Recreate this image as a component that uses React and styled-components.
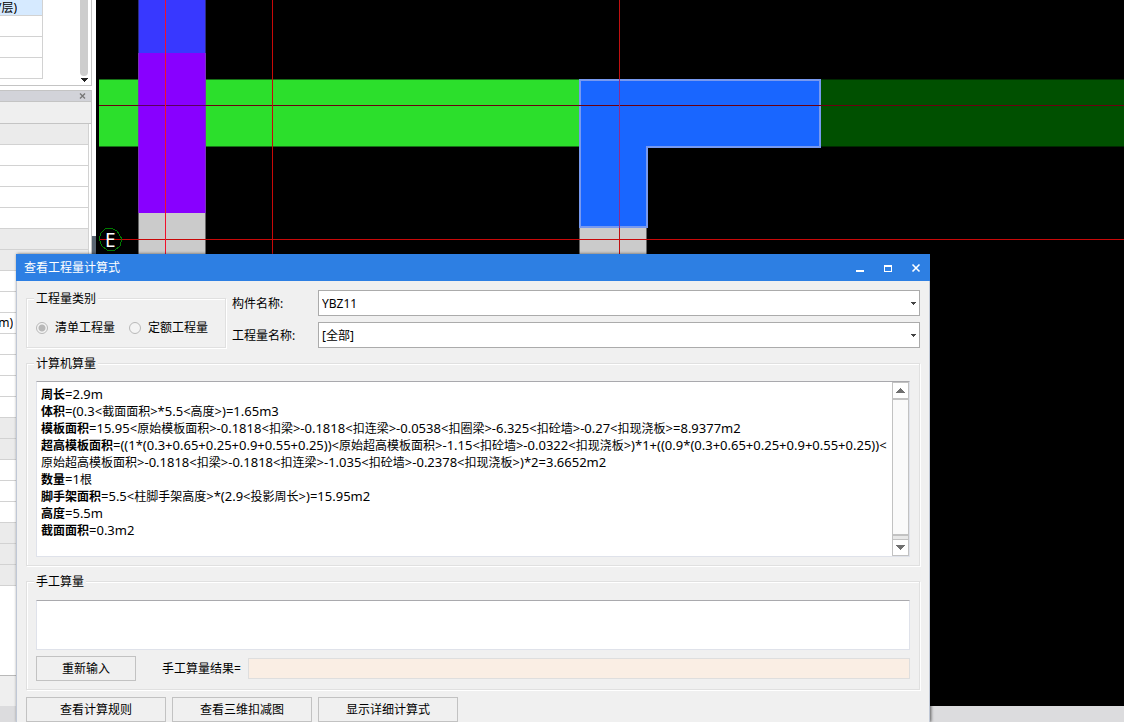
import { useState } from 'react';
import styled, { createGlobalStyle } from 'styled-components';

const GlobalStyle = createGlobalStyle`
* {
  box-sizing: border-box;
}
body {
  margin: 0;
  background: #000;
}
body, button, input, select, textarea {
  font-family: "Noto Sans", "Noto Sans CJK SC", sans-serif;
  font-size: 12px;
  line-height: 16px;
  color: #000;
}
`

const Page = styled.div`
position: relative;
display: grid;
grid-template-columns: 92px 4px 1fr;
grid-template-rows: 1fr 16px;
height: 100vh;
overflow: hidden;
`

const Dock = styled.aside`
display: flex;
flex-direction: column;
min-height: 0;
overflow: hidden;
background: #fff;
`
const TreePanel = styled.div`
display: flex;
justify-content: space-between;
height: 86px;
flex: none;
padding-right: 3px;
border-right: 1px solid #c4c4c4;
border-bottom: 1px solid #c4c4c4;
`
const Table = styled.table`
width: ${(p) => p.$width};
height: max-content;
border-spacing: 0;
border-right: 1px solid #d2d2d2;

td {
  height: 21px;
  padding: 0;
  line-height: 16px;
  white-space: nowrap;
  border-bottom: 1px solid #d2d2d2;
}
`
const Cell = styled.td`
background: ${(p) => p.$fill};
`
const TreeCell = styled(Cell)`
&& {
  height: 16px;
  line-height: 15px;
}
`
const Clipped = styled.div`
display: flex;
justify-content: flex-end;
width: ${(p) => p.$width};
overflow: hidden;
`
const TreeScroll = styled.div`
display: flex;
flex-direction: column;
align-items: center;
gap: 2px;
width: 8px;

span {
  width: 8px;
  height: 76px;
  border-radius: 0 0 4px 4px;
  background: #cdcdcd;
}
`
const PanelTitle = styled.div`
display: flex;
align-items: center;
justify-content: flex-end;
flex: none;
height: 12px;
margin-top: 4px;
padding-right: 5px;
background: #d2d3d9;
border: solid #c4c4c4;
border-width: 1px 1px 1px 0;

button {
  display: flex;
  padding: 0;
  border: 0;
  background: none;
}
`
const PanelBar = styled.div`
flex: none;
height: 22px;
background: #efefef;
border-right: 1px solid #c4c4c4;
border-bottom: 1px solid #c4c4c4;
`
const Properties = styled.div`
flex: none;
border-right: 1px solid #c4c4c4;
`
const EmptyArea = styled.div`
flex: none;
height: 90px;
border-bottom: 1px solid #b9b9b9;
`
const DockFoot = styled.div`
flex: 1;
background: #efefef;
`
const Splitter = styled.div`
padding-top: 236px;
background: #fff;

&::after {
  content: "";
  display: block;
  height: 100%;
  background: #5a6672;
}
`
const Canvas = styled.main`
min-width: 0;
overflow: hidden;
background: #000;

svg {
  display: block;
}
`
const StatusBar = styled.footer`
grid-column: 1 / -1;
background: #dcdcde;
`

const Dialog = styled.section`
position: absolute;
left: 16px;
right: 194px;
top: 254px;
bottom: 0;
display: flex;
flex-direction: column;
background: #f0f0f0;
box-shadow: 1px 0 3px rgba(0, 0, 0, 0.6);
`
const TitleBar = styled.header`
display: flex;
align-items: center;
justify-content: space-between;
flex: none;
height: 27px;
padding: 0 8px;
background: #2d7fe3;

h1 {
  margin: 0;
  font-size: 12px;
  font-weight: 400;
  color: #fff;
}
`
const WindowButtons = styled.div`
display: flex;
gap: 16px;

button {
  display: flex;
  padding: 0;
  border: 0;
  background: none;
}
`
const Body = styled.div`
flex: 1;
display: flex;
flex-direction: column;
gap: 7px;
padding: 9px 9px 0;
border: solid #c0c8d6;
border-width: 0 1px;
`
const TopRow = styled.div`
display: flex;
gap: 6px;
`
const Group = styled.fieldset`
flex: none;
min-width: 0;
margin: 0;
padding: ${(p) => p.$pad};
width: ${(p) => p.$width || 'auto'};
border: 1px solid #e0e0e0;
box-shadow: inset 1px 1px 0 #fff, 1px 1px 0 #fff;

legend {
  height: 16px;
  padding: 0 2px;
  margin-left: -2px;
  line-height: 18px;
  background: #f0f0f0;
}
`
const Radios = styled.div`
display: flex;
gap: 14px;
height: 17px;
`
const RadioLabel = styled.label`
display: flex;
align-items: center;
gap: 7px;
line-height: 18px;

input {
  appearance: none;
  width: 12px;
  height: 12px;
  margin: 0;
  border: 1px solid #b8b8b8;
  border-radius: 50%;
  background: #f4f4f4;
}
input:checked {
  background: radial-gradient(circle, #b8b8b8 3px, #f4f4f4 4px);
}
`
const Fields = styled.div`
flex: 1;
display: grid;
grid-template-columns: 80px 1fr;
gap: 6px;
align-items: center;

label {
  padding-top: 2px;
}
`
const SelectBox = styled.div`
display: grid;
align-items: center;

select, svg {
  grid-area: 1 / 1;
}
select {
  appearance: none;
  width: 100%;
  height: 26px;
  padding: 2px 16px 0 3px;
  border: 1px solid #ababab;
  border-radius: 0;
  background: #fff;
}
svg {
  justify-self: end;
  margin-right: 4px;
  pointer-events: none;
}
`
const Report = styled.div`
display: flex;
height: 176px;
background: #fff;
border: 1px solid #dfe2ea;
border-top-color: #a9a9ad;
`
const Lines = styled.div`
flex: 1;
min-width: 0;
padding: 4px 0 0 4px;
overflow: hidden;
`
const Line = styled.p`
margin: 0;
height: 17px;
font-size: 13px;
line-height: 17px;
white-space: nowrap;

b, span {
  font-size: 12px;
}
`
const ScrollBar = styled.div`
display: flex;
flex-direction: column;
width: 17px;
background: #e8e8e8;
border: solid #c2c2c2;
border-width: 1px 1px 0;

button {
  display: flex;
  align-items: center;
  justify-content: center;
  height: 16px;
  padding: 0;
  border: 0;
  border-bottom: 1px solid #c2c2c2;
  background: #fff;
}
button:last-child {
  height: 17px;
  margin-top: 3px;
  border-top: 1px solid #c2c2c2;
}
span {
  flex: 1;
  background: #fafafa;
  border: solid #c2c2c2;
  border-width: 1px 0 2px;
}
`
const ManualInput = styled.textarea`
display: block;
width: 100%;
height: 50px;
padding: 4px;
resize: none;
background: #fff;
border: 1px solid #dfe2ea;
border-top-color: #a9a9ad;
border-radius: 0;
`
const ResultRow = styled.div`
display: flex;
align-items: center;
margin-top: 6px;

label {
  margin: 0 7px 0 26px;
}
input {
  flex: 1;
  min-width: 0;
  height: 21px;
  border: 1px solid #dedede;
  background: #faeee4;
}
`
const Button = styled.button`
width: ${(p) => p.$width};
height: 25px;
padding: 0;
border: 1px solid #c2c2c2;
border-radius: 0;
background: #f0f0f0;
`
const Actions = styled.div`
display: flex;
gap: 6px;
`

const formulas = [
  ['周长', '=2.9m'],
  ['体积', '=(0.3<截面面积>*5.5<高度>)=1.65m3'],
  ['模板面积', '=15.95<原始模板面积>-0.1818<扣梁>-0.1818<扣连梁>-0.0538<扣圈梁>-6.325<扣砼墙>-0.27<扣现浇板>=8.9377m2'],
  ['超高模板面积', '=((1*(0.3+0.65+0.25+0.9+0.55+0.25))<原始超高模板面积>-1.15<扣砼墙>-0.0322<扣现浇板>)*1+((0.9*(0.3+0.65+0.25+0.9+0.55+0.25))<'],
  ['', '原始超高模板面积>-0.1818<扣梁>-0.1818<扣连梁>-1.035<扣砼墙>-0.2378<扣现浇板>)*2=3.6652m2'],
  ['数量', '=1根'],
  ['脚手架面积', '=5.5<柱脚手架高度>*(2.9<投影周长>)=15.95m2'],
  ['高度', '=5.5m'],
  ['截面面积', '=0.3m2'],
]

// g = shaded row, w = editable row
const propertyRows = 'gwwwwggwwwwwwwggwwwggg'.split('')

// numbers are set one size larger than the Chinese terms
function Formula({ text }) {
  return text.split(/([\u4e00-\u9fff]+)/).map((part, i) => (
    i % 2 ? <span key={i}>{part}</span> : part
  ))
}

function Drawing() {
  return (
    <svg width="100%" height="706" shapeRendering="crispEdges">
      <rect x="3" y="79" width="481" height="68" fill="#167016" />
      <rect x="3" y="80" width="481" height="66" fill="#2cdf2c" />
      <rect x="724" y="79" width="100%" height="68" fill="#002800" />
      <rect x="724" y="80" width="100%" height="66" fill="#005000" />
      <rect x="43" y="0" width="66" height="53" fill="#3838ff" />
      <rect x="43" y="53" width="66" height="160" fill="#8800ff" />
      <rect x="43" y="213" width="66" height="60" fill="#cbcbcb" />
      <rect x="484" y="226" width="66" height="40" fill="#cbcbcb" />
      <path d="M42.5 0V53M109.5 0V53" stroke="#2c2c80" />
      <path d="M42.5 53V213M109.5 53V213" stroke="#7a30b8" />
      <path d="M42.5 213V260M109.5 213V260M483.5 228V260M550.5 228V260" stroke="#666" />
      <path d="M484 80H724V147H551V227H484Z" fill="#1966ff" stroke="#7799f0" strokeWidth="2" />
      <path d="M3 105.5H42M110 105.5H2000" stroke="#6a0010" />
      <path d="M42 105.5H110" stroke="#5c0060" />
      <path d="M3 239.5H2000" stroke="#c80808" />
      <path d="M69.5 0V260" stroke="#f0102c" />
      <path d="M176.5 0V260" stroke="#c80808" />
      <path d="M523.5 0V79M523.5 228V260" stroke="#c01010" />
      <path d="M523.5 79V228" stroke="#8f2c8c" />
      <path d="M15 228l6 3 5 8-2 7-5 4-4 1-4-1-5-4-3-7 2-6 4-4z" fill="none" stroke="#007a00" />
      <text x="9" y="247" fill="#fff" fontSize="19" fontFamily="Noto Sans">E</text>
    </svg>
  )
}

function Arrow({ up, size, color }) {
  return (
    <svg width={size * 2 - 1} height={size} shapeRendering="crispEdges">
      <path d={up ? `M0 ${size}L${size - 0.5} 0L${size * 2 - 1} ${size}z` : `M0 0H${size * 2 - 1}L${size - 0.5} ${size}z`} fill={color} />
    </svg>
  )
}

function App() {
  const [manual, setManual] = useState('')

  return (
    <Page>
      <GlobalStyle />
      <Dock>
        <TreePanel>
          <Table $width="43px">
            <tbody>
              <tr><TreeCell $fill="#d6eaff"><Clipped $width="17px">/层)</Clipped></TreeCell></tr>
              <tr><Cell /></tr>
              <tr><Cell /></tr>
              <tr><Cell /></tr>
            </tbody>
          </Table>
          <TreeScroll>
            <span />
            <Arrow size={4} color="#222" />
          </TreeScroll>
        </TreePanel>
        <PanelTitle>
          <button aria-label="关闭面板">
            <svg width="7" height="6"><path d="M1 0.5L6 5.5M6 0.5L1 5.5" stroke="#777" strokeWidth="1.4" /></svg>
          </button>
        </PanelTitle>
        <PanelBar />
        <Properties>
          <Table $width="89px">
            <tbody>
              {propertyRows.map((kind, i) => (
                <tr key={i}>
                  <Cell $fill={kind === 'g' ? '#ebebeb' : '#fff'}>{i === 9 && <Clipped $width="13px">m)</Clipped>}</Cell>
                </tr>
              ))}
            </tbody>
          </Table>
        </Properties>
        <EmptyArea />
        <DockFoot />
      </Dock>
      <Splitter />
      <Canvas>
        <Drawing />
      </Canvas>
      <StatusBar />

      <Dialog role="dialog" aria-labelledby="dialog-title">
        <TitleBar>
          <h1 id="dialog-title">查看工程量计算式</h1>
          <WindowButtons>
            <button aria-label="最小化">
              <svg width="12" height="12" shapeRendering="crispEdges"><path d="M2 8h8v2H2z" fill="#fff" /></svg>
            </button>
            <button aria-label="最大化">
              <svg width="12" height="12" shapeRendering="crispEdges"><path d="M2 3h8v7H2zM3 5v4h6V5z" fill="#fff" fillRule="evenodd" /></svg>
            </button>
            <button aria-label="关闭">
              <svg width="12" height="12"><path d="M2.5 2.5L9.5 9.5M9.5 2.5L2.5 9.5" stroke="#fff" strokeWidth="1.6" /></svg>
            </button>
          </WindowButtons>
        </TitleBar>
        <Body>
          <TopRow>
            <Group $width="200px" $pad="13px 9px 10px">
              <legend>工程量类别</legend>
              <Radios>
                <RadioLabel><input type="radio" name="kind" defaultChecked disabled />清单工程量</RadioLabel>
                <RadioLabel><input type="radio" name="kind" disabled />定额工程量</RadioLabel>
              </Radios>
            </Group>
            <Fields>
              <label htmlFor="component">构件名称:</label>
              <SelectBox>
                <select id="component"><option>YBZ11</option></select>
                <Arrow size={3} color="#444" />
              </SelectBox>
              <label htmlFor="quantity">工程量名称:</label>
              <SelectBox>
                <select id="quantity"><option>[全部]</option></select>
                <Arrow size={3} color="#444" />
              </SelectBox>
            </Fields>
          </TopRow>

          <Group $pad="10px 9px 8px">
            <legend>计算机算量</legend>
            <Report>
              <Lines>
                {formulas.map(([name, formula], i) => (
                  <Line key={i}>{name && <b>{name}</b>}<Formula text={formula} /></Line>
                ))}
              </Lines>
              <ScrollBar>
                <button aria-label="向上"><Arrow up size={5} color="#707070" /></button>
                <span />
                <button aria-label="向下"><Arrow size={5} color="#707070" /></button>
              </ScrollBar>
            </Report>
          </Group>

          <Group $pad="11px 9px 8px">
            <legend>手工算量</legend>
            <ManualInput aria-label="手工算量" value={manual} onChange={(e) => setManual(e.target.value)} />
            <ResultRow>
              <Button $width="100px" onClick={() => setManual('')}>重新输入</Button>
              <label htmlFor="result">手工算量结果=</label>
              <input id="result" readOnly />
            </ResultRow>
          </Group>

          <Actions>
            <Button $width="140px">查看计算规则</Button>
            <Button $width="140px">查看三维扣减图</Button>
            <Button $width="140px">显示详细计算式</Button>
          </Actions>
        </Body>
      </Dialog>
    </Page>
  )
}

export default App
